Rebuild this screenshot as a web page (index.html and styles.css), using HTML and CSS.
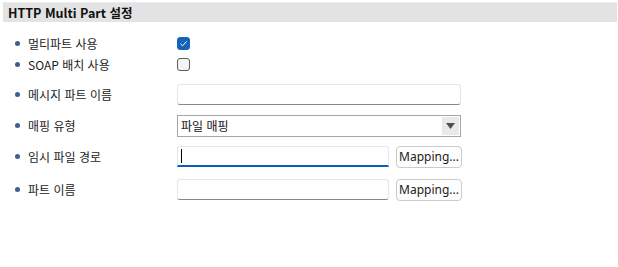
FILE: index.html
```html
<!DOCTYPE html>
<html lang="ko">
<head>
  <meta charset="UTF-8">
  <title>HTTP Multi Part 설정</title>
  <link rel="stylesheet" href="styles.css">
</head>
<body>
  <div class="panel">
    <div class="panel-title">HTTP Multi Part 설정</div>

    <div class="form">
      <div class="row row-check first">
        <span class="label">멀티파트 사용</span>
        <span class="checkbox checked">
          <svg width="9" height="9" viewBox="0 0 9 9"><path d="M1.5 4.8 L3.6 6.8 L7.6 2.4" fill="none" stroke="#fff" stroke-width="1"/></svg>
        </span>
      </div>
      <div class="row row-check">
        <span class="label">SOAP 배치 사용</span>
        <span class="checkbox"></span>
      </div>

      <div class="row row-field gap">
        <span class="label">메시지 파트 이름</span>
        <div class="field"></div>
      </div>
      <div class="row row-field">
        <span class="label">매핑 유형</span>
        <div class="select">
          <span class="select-value">파일 매핑</span>
          <span class="select-arrow"><svg width="9" height="6" viewBox="0 0 9 6"><path d="M0 0 H9 L4.5 6 Z" fill="#4f4f4f"/></svg></span>
        </div>
      </div>
      <div class="row row-field">
        <span class="label">임시 파일 경로</span>
        <div class="field short focused"><span class="caret"></span></div>
        <button class="btn">Mapping...</button>
      </div>
      <div class="row row-field last">
        <span class="label">파트 이름</span>
        <div class="field short"></div>
        <button class="btn">Mapping...</button>
      </div>
    </div>
  </div>
</body>
</html>
```
FILE: styles.css
```css
body {
  margin: 0;
  background: #fff;
  font-family: "Noto Sans CJK KR", "Noto Sans", sans-serif;
  font-size: 12px;
  color: #1b1b1b;
}
.panel {
  padding: 2px 1px 0 3px;
}
.panel-title {
  background: #e3e3e3;
  border-top: 1px solid #ececec;
  height: 19px;
  line-height: 19px;
  padding-left: 5px;
  font-size: 12.5px;
  font-weight: bold;
  color: #111;
}
.form {
  display: flex;
  flex-direction: column;
  padding-left: 12px;
}
.row {
  display: flex;
  align-items: center;
}
.row.first {
  margin-top: 11px;
}
.row-check {
  height: 21px;
}
.row-field {
  height: 31px;
}
.row.gap {
  margin-top: 4px;
}
.row.last {
  margin-top: 2px;
}
.label {
  width: 162px;
  flex: none;
  display: flex;
  align-items: center;
}
.label::before {
  content: "";
  width: 5px;
  height: 5px;
  border-radius: 50%;
  background: #3c5f8f;
  margin-right: 8px;
}
.checkbox {
  width: 13px;
  height: 13px;
  box-sizing: border-box;
  border: 1px solid #5c5c5c;
  border-radius: 3px;
  background: #f4f4f4;
  display: flex;
  align-items: center;
  justify-content: center;
}
.checkbox.checked {
  background: #1465b7;
  border-color: #1465b7;
}
.field {
  width: 284px;
  height: 21px;
  box-sizing: border-box;
  border: 1px solid #e6e6e6;
  border-bottom-color: #888;
  border-radius: 3px;
  background: #fff;
  display: flex;
  align-items: center;
  padding-left: 3px;
}
.field.short {
  width: 212px;
}
.field.focused {
  border-bottom: 2px solid #0b5fb3;
  border-radius: 3px 3px 0 0;
}
.caret {
  width: 1px;
  height: 14px;
  background: #000;
}
.select {
  width: 284px;
  height: 22px;
  box-sizing: border-box;
  border: 1px solid #a6a6a6;
  display: flex;
  align-items: center;
  justify-content: space-between;
  padding: 1px;
}
.select-value {
  padding-left: 2px;
  color: #111;
}
.select-arrow {
  width: 17px;
  height: 18px;
  background: #e9e9e9;
  display: flex;
  align-items: center;
  justify-content: center;
}
.btn {
  margin-left: 7px;
  width: 66px;
  height: 22px;
  border: 1px solid #cbcbcb;
  border-radius: 4px;
  background: #fdfdfd;
  font-family: "Noto Sans", sans-serif;
  font-size: 12px;
  color: #1b1b1b;
  padding: 0;
}
```
